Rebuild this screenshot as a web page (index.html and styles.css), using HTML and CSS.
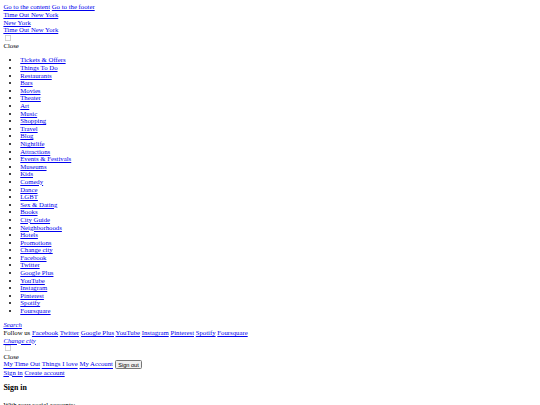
FILE: index.html
```html
<!DOCTYPE html>
<html lang="en">
<head>
  <meta charset="UTF-8">
  <meta name="viewport" content="width=device-width, initial-scale=1.0">
  <title>Time Out New York</title>
  <link rel="stylesheet" href="styles.css">
</head>
<body>
  <div class="skip-links">
    <a href="#content">Go to the content</a>
    <a href="#footer">Go to the footer</a>
  </div>
  <div class="brand"><a href="#">Time Out New York</a></div>
  <div class="city"><a href="#">New York</a></div>
  <div class="brand"><a href="#">Time Out New York</a></div>

  <nav class="main-nav">
    <input type="checkbox" id="nav-toggle">
    <div class="close">Close</div>
    <ul class="nav-list">
      <li><a href="#">Tickets &amp; Offers</a></li>
      <li><a href="#">Things To Do</a></li>
      <li><a href="#">Restaurants</a></li>
      <li><a href="#">Bars</a></li>
      <li><a href="#">Movies</a></li>
      <li><a href="#">Theater</a></li>
      <li><a href="#">Art</a></li>
      <li><a href="#">Music</a></li>
      <li><a href="#">Shopping</a></li>
      <li><a href="#">Travel</a></li>
      <li><a href="#">Blog</a></li>
      <li><a href="#">Nightlife</a></li>
      <li><a href="#">Attractions</a></li>
      <li><a href="#">Events &amp; Festivals</a></li>
      <li><a href="#">Museums</a></li>
      <li><a href="#">Kids</a></li>
      <li><a href="#">Comedy</a></li>
      <li><a href="#">Dance</a></li>
      <li><a href="#">LGBT</a></li>
      <li><a href="#">Sex &amp; Dating</a></li>
      <li><a href="#">Books</a></li>
      <li><a href="#">City Guide</a></li>
      <li><a href="#">Neighborhoods</a></li>
      <li><a href="#">Hotels</a></li>
      <li><a href="#">Promotions</a></li>
      <li><a href="#">Change city</a></li>
      <li><a href="#">Facebook</a></li>
      <li><a href="#">Twitter</a></li>
      <li><a href="#">Google Plus</a></li>
      <li><a href="#">YouTube</a></li>
      <li><a href="#">Instagram</a></li>
      <li><a href="#">Pinterest</a></li>
      <li><a href="#">Spotify</a></li>
      <li><a href="#">Foursquare</a></li>
    </ul>
  </nav>

  <div class="search"><a href="#"><i>Search</i></a></div>
  <div class="follow">
    Follow us
    <a href="#">Facebook</a>
    <a href="#">Twitter</a>
    <a href="#">Google Plus</a>
    <a href="#">YouTube</a>
    <a href="#">Instagram</a>
    <a href="#">Pinterest</a>
    <a href="#">Spotify</a>
    <a href="#">Foursquare</a>
  </div>
  <div class="change-city"><a href="#"><i>Change city</i></a></div>

  <div class="account">
    <input type="checkbox" id="account-toggle">
    <div class="close">Close</div>
    <div class="account-links">
      <a href="#">My Time Out</a>
      <a href="#">Things I love</a>
      <a href="#">My Account</a>
      <button type="button">Sign out</button>
    </div>
    <div class="account-links">
      <a href="#">Sign in</a>
      <a href="#">Create account</a>
    </div>
    <h3>Sign in</h3>
    <p>With your social accounts:</p>
  </div>
</body>
</html>
```

FILE: styles.css
```css
/* page was captured at 1280px wide and shrunk to fit */
html {
  zoom: 0.421875;
}

body {
  font-family: "Liberation Serif", "Times New Roman", serif;
  line-height: 1.125;
}

a {
  color: #0000ee;
}

.close {
  color: #000;
}
```
